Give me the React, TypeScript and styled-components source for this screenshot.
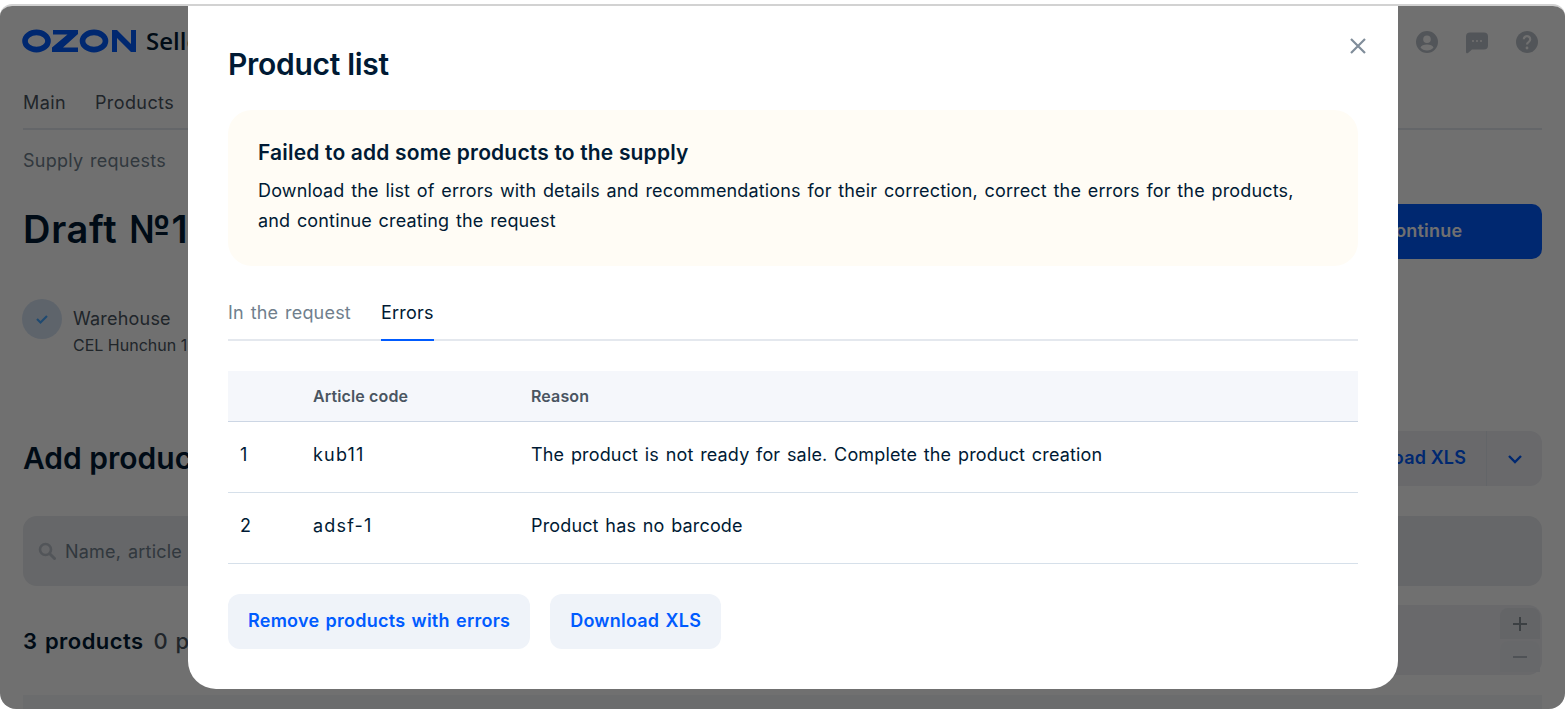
import styled, { createGlobalStyle } from "styled-components";

const GlobalStyle = createGlobalStyle`
  html, body {
    margin: 0;
    padding: 0;
    height: 100%;
    background: #fff;
    overflow: hidden;
    font-family: Inter, "Liberation Sans", sans-serif;
    letter-spacing: 0.15px;
    word-spacing: 1.5px;
    color: #001a34;
  }
`;

const Frame = styled.div`
  position: relative;
  height: 709px;
  padding-top: 4px;
  box-sizing: border-box;
`;

const Window = styled.div`
  position: relative;
  height: 705px;
  box-sizing: border-box;
  border-top: 2px solid #d2d2d2;
  border-radius: 12px 12px 16px 16px;
  overflow: hidden;
  background: #fff;
`;

const Page = styled.div`
  padding: 0 23px;
  display: flex;
  flex-direction: column;
`;

const Header = styled.div`
  height: 70px;
  display: flex;
  align-items: center;
  justify-content: space-between;
  padding-right: 3px;
  padding-bottom: 1px;
  box-sizing: border-box;
`;

const Brand = styled.div`
  display: flex;
  align-items: center;
  gap: 8px;
  margin-left: -1px;
`;

const SellerWord = styled.span`
  font-family: "Open Sans", sans-serif;
  font-size: 24px;
  font-weight: 600;
  letter-spacing: 0;
  color: #001a34;
`;

const HeaderIcons = styled.div`
  display: flex;
  gap: 26px;
  margin-top: 3px;
`;

const Nav = styled.nav`
  height: 54px;
  display: flex;
  gap: 29px;
  padding-top: 14px;
  box-sizing: border-box;
  border-bottom: 2px solid #e4e8ee;
  font-size: 18px;
  line-height: 26px;
  letter-spacing: 0.4px;
  color: #4a5561;
`;

const Crumb = styled.div`
  margin-top: 18px;
  font-size: 18px;
  line-height: 26px;
  letter-spacing: 0.25px;
  color: #707f8d;
`;

const TitleRow = styled.div`
  margin-top: 30px;
  display: flex;
  justify-content: space-between;
  align-items: center;
  height: 55px;
`;

const DraftTitle = styled.h1`
  margin: 0 0 6px;
  font-size: 38px;
  line-height: 50px;
  font-weight: 600;
  letter-spacing: 0.7px;
  color: #001a34;
`;

const ContinueButton = styled.button`
  width: 340px;
  height: 55px;
  border: 0;
  border-radius: 10px;
  background: #005bff;
  color: #fff;
  font: 600 18px Inter, sans-serif;
  letter-spacing: 0.2px;
  padding: 0 0 2px 100px;
`;

const Step = styled.div`
  margin-top: 40px;
  margin-left: -1px;
  display: flex;
  gap: 11px;
`;

const StepCircle = styled.div`
  width: 40px;
  height: 40px;
  border-radius: 50%;
  background: #d7e4f4;
  display: flex;
  align-items: center;
  justify-content: center;
`;

const StepText = styled.div`
  display: flex;
  flex-direction: column;
`;

const StepName = styled.span`
  font-size: 18px;
  line-height: 26px;
  margin-top: 7px;
  letter-spacing: 0.2px;
  color: #4a5561;
`;

const StepSub = styled.span`
  font-size: 16px;
  line-height: 26px;
  letter-spacing: 0;
  word-spacing: 0;
  color: #4a5561;
`;

const AddRow = styled.div`
  margin-top: 73px;
  height: 55px;
  display: flex;
  justify-content: space-between;
  align-items: center;
`;

const AddTitle = styled.h2`
  margin: 0 0 2px;
  font-size: 30px;
  font-weight: 600;
  letter-spacing: 0;
  word-spacing: 0;
  color: #001a34;
`;

const SplitButton = styled.div`
  height: 55px;
  width: 340px;
  display: flex;
  border-radius: 12px;
  background: #eef0f4;
  color: #005bff;
  font-size: 18px;
  font-weight: 600;
  word-spacing: 0;
`;

const SplitLabel = styled.div`
  flex: 1;
  display: flex;
  align-items: center;
  justify-content: flex-end;
  padding: 0 20px 2px 0;
  border-right: 1px solid #e2e6ec;
`;

const SplitArrow = styled.div`
  width: 55px;
  display: flex;
  align-items: center;
  justify-content: center;
`;

const SearchBox = styled.div`
  margin-top: 30px;
  height: 70px;
  border-radius: 14px;
  background: #e8eaee;
  display: flex;
  align-items: center;
  gap: 9px;
  padding-left: 15px;
  font-size: 18px;
  letter-spacing: 0.22px;
  color: #707f8d;
`;

const CountRow = styled.div`
  margin-top: 19px;
  height: 70px;
  display: flex;
  align-items: center;
  gap: 11px;
  padding-top: 2px;
  box-sizing: border-box;
`;

const CountStrong = styled.span`
  font-size: 22px;
  font-weight: 600;
  letter-spacing: 0.45px;
  color: #001a34;
`;

const CountMuted = styled.span`
  font-size: 22px;
  font-weight: 500;
  margin-left: -1px;
  color: #4a5561;
`;

const ZoomBox = styled.div`
  margin-left: auto;
  margin-top: -2px;
  width: 340px;
  height: 70px;
  border-radius: 14px;
  background: #eef0f4;
  display: flex;
  justify-content: flex-end;
  padding: 3px 2px;
  box-sizing: border-box;
`;

const ZoomColumn = styled.div`
  width: 40px;
  display: flex;
  flex-direction: column;
  gap: 2px;
`;

const ZoomKey = styled.div<{ $muted?: boolean }>`
  flex: 1;
  display: flex;
  align-items: center;
  justify-content: center;
  background: ${(p) => (p.$muted ? "#ebedf1" : "#e3e5ea")};
  border-radius: 8px 8px 0 0;
`;

const TableStub = styled.div`
  margin-top: 20px;
  height: 40px;
  background: #f4f5f7;
`;

const Overlay = styled.div`
  position: absolute;
  inset: 0;
  background: rgba(0, 0, 0, 0.56);
`;

const Modal = styled.div`
  position: absolute;
  top: 0;
  left: 188px;
  width: 1210px;
  height: 683px;
  box-sizing: border-box;
  padding: 0 40px;
  background: #fff;
  border-radius: 0 0 28px 28px;
  display: flex;
  flex-direction: column;
`;

const CloseButton = styled.button`
  position: absolute;
  top: 28px;
  right: 28px;
  width: 24px;
  height: 24px;
  padding: 0;
  border: 0;
  background: none;
  display: flex;
  align-items: center;
  justify-content: center;
`;

const ModalTitle = styled.h2`
  margin: 38px 0 0;
  font-size: 30px;
  line-height: 40px;
  font-weight: 600;
  letter-spacing: -0.3px;
  word-spacing: 0;
  color: #001a34;
`;

const Notice = styled.div`
  margin-top: 26px;
  height: 156px;
  box-sizing: border-box;
  padding: 28px 30px 0;
  border-radius: 24px;
  background: #fffcf5;
`;

const NoticeTitle = styled.div`
  font-size: 21px;
  line-height: 30px;
  font-weight: 600;
  letter-spacing: 0.17px;
  word-spacing: 0;
  color: #001a34;
`;

const NoticeText = styled.p`
  margin: 8px 0 0;
  font-size: 18px;
  line-height: 30px;
  color: #001a34;
`;

const Tabs = styled.div`
  margin-top: 29px;
  height: 44px;
  display: flex;
  gap: 30px;
  border-bottom: 2px solid #e4e8ee;
`;

const Tab = styled.div<{ $active?: boolean }>`
  height: 44px;
  box-sizing: content-box;
  font-size: 18px;
  line-height: 36px;
  letter-spacing: 0.2px;
  color: ${(p) => (p.$active ? "#001a34" : "#707f8d")};
  border-bottom: 2px solid ${(p) => (p.$active ? "#005bff" : "transparent")};
`;

const ErrorTable = styled.table`
  margin-top: 30px;
  width: 100%;
  border-collapse: collapse;
  table-layout: fixed;
`;

const HeadCell = styled.th`
  height: 50px;
  padding: 0 0 0 12px;
  box-sizing: border-box;
  background: #f5f7fb;
  border-bottom: 1px solid #ccd6e4;
  text-align: left;
  font-size: 16px;
  font-weight: 600;
  letter-spacing: 0.12px;
  word-spacing: 0;
  color: #4a5561;
`;

const Cell = styled.td`
  height: 71px;
  padding: 0 0 4px 12px;
  box-sizing: border-box;
  border-bottom: 1px solid #d6e0ea;
  font-size: 18px;
  color: #001a34;
`;

const CodeCell = styled(Cell)`
  letter-spacing: 1.2px;
`;

const Actions = styled.div`
  margin-top: 30px;
  display: flex;
  gap: 20px;
`;

const ActionButton = styled.button`
  height: 55px;
  padding: 0 20px 2px;
  border: 0;
  border-radius: 12px;
  background: #eff3f9;
  color: #005bff;
  font: 600 18px Inter, sans-serif;
  letter-spacing: 0.24px;
  word-spacing: 1.5px;
`;

const OzonLogo = () => (
  <svg width="116" height="24" viewBox="0 0 116 24" aria-label="OZON">
    <ellipse cx="14.5" cy="12" rx="11.5" ry="8.6" fill="none" stroke="#005bff" strokeWidth="5.6" />
    <polygon points="31,1 56,1 56,5 41,18.4 56,18.4 56,23 30,23 30,18.6 45.5,5.4 31,5.4" fill="#005bff" />
    <ellipse cx="72" cy="12" rx="11.5" ry="8.6" fill="none" stroke="#005bff" strokeWidth="5.6" />
    <polygon points="90,1 95,1 109,15 109,1 114,1 114,23 109,23 95,9 95,23 90,23" fill="#005bff" />
  </svg>
);

const UserIcon = () => (
  <svg width="24" height="24" viewBox="0 0 24 24">
    <path
      fill="#bcc2ca"
      fillRule="evenodd"
      d="M12 1a11 11 0 1 1 0 22 11 11 0 0 1 0-22Zm0 4.5a3.8 3.8 0 1 0 0 7.6 3.8 3.8 0 0 0 0-7.6ZM5.5 17.5c1.4 2 3.8 3 6.5 3s5.100-1 6.500-3c-.5-2-3.500-3-6.500-3s-6 1-6.500 3Z"
    />
  </svg>
);

const ChatIcon = () => (
  <svg width="24" height="24" viewBox="0 0 24 24">
    <path
      fill="#bcc2ca"
      fillRule="evenodd"
      d="M5 2.500h14a4 4 0 0 1 4 4v9a4 4 0 0 1-4 4H7l-4 3.500c-.8.5-2 .2-2-1V6.500a4 4 0 0 1 4-4Z"
    />
    <circle cx="8" cy="11" r="1" fill="#fff" />
    <circle cx="12" cy="11" r="1" fill="#fff" />
    <circle cx="16" cy="11" r="1" fill="#fff" />
  </svg>
);

const HelpIcon = () => (
  <svg width="24" height="24" viewBox="0 0 24 24">
    <circle cx="12" cy="12" r="11" fill="#bcc2ca" />
    <path d="M8.800 9.300a3.200 3.200 0 1 1 4.800 2.800c-1 .6-1.600 1.100-1.600 2.400" fill="none" stroke="#fff" strokeWidth="2.200" />
    <circle cx="12" cy="18" r="1.400" fill="#fff" />
  </svg>
);

const App = () => {
  return (
    <>
      <GlobalStyle />
      <Frame>
        <Window>
          <Page>
            <Header>
              <Brand>
                <OzonLogo />
                <SellerWord>Seller</SellerWord>
              </Brand>
              <HeaderIcons>
                <UserIcon />
                <ChatIcon />
                <HelpIcon />
              </HeaderIcons>
            </Header>
            <Nav>
              <span>Main</span>
              <span>Products</span>
            </Nav>
            <Crumb>Supply requests</Crumb>
            <TitleRow>
              <DraftTitle>Draft №1</DraftTitle>
              <ContinueButton>Continue</ContinueButton>
            </TitleRow>
            <Step>
              <StepCircle>
                <svg width="14" height="12" viewBox="0 0 14 12">
                  <path d="M2 6l3.500 3.500L12 3" fill="none" stroke="#48a8ff" strokeWidth="2.200" />
                </svg>
              </StepCircle>
              <StepText>
                <StepName>Warehouse</StepName>
                <StepSub>CEL Hunchun 1</StepSub>
              </StepText>
            </Step>
            <AddRow>
              <AddTitle>Add products</AddTitle>
              <SplitButton>
                <SplitLabel>Upload XLS</SplitLabel>
                <SplitArrow>
                  <svg width="16" height="10" viewBox="0 0 16 10">
                    <path d="M2 2l6 6 6-6" fill="none" stroke="#005bff" strokeWidth="2.400" />
                  </svg>
                </SplitArrow>
              </SplitButton>
            </AddRow>
            <SearchBox>
              <svg width="18" height="18" viewBox="0 0 18 18">
                <circle cx="7.500" cy="7.500" r="5.500" fill="none" stroke="#bcc2ca" strokeWidth="2.600" />
                <path d="M12 12l4.500 4.500" stroke="#bcc2ca" strokeWidth="3" strokeLinecap="round" />
              </svg>
              Name, article
            </SearchBox>
            <CountRow>
              <CountStrong>3 products</CountStrong>
              <CountMuted>0 pieces</CountMuted>
              <ZoomBox>
                <ZoomColumn>
                  <ZoomKey>
                    <svg width="16" height="16" viewBox="0 0 16 16">
                      <path d="M8 1v14M1 8h14" stroke="#8a929a" strokeWidth="2" />
                    </svg>
                  </ZoomKey>
                  <ZoomKey $muted>
                    <svg width="16" height="16" viewBox="0 0 16 16">
                      <path d="M1 8h14" stroke="#b5bcc4" strokeWidth="2" />
                    </svg>
                  </ZoomKey>
                </ZoomColumn>
              </ZoomBox>
            </CountRow>
            <TableStub />
          </Page>
          <Overlay />
          <Modal>
            <CloseButton aria-label="Close">
              <svg width="18" height="18" viewBox="0 0 18 18">
                <path d="M2 2l14 14M16 2L2 16" stroke="#808d9a" strokeWidth="2.200" />
              </svg>
            </CloseButton>
            <ModalTitle>Product list</ModalTitle>
            <Notice>
              <NoticeTitle>Failed to add some products to the supply</NoticeTitle>
              <NoticeText>
                Download the list of errors with details and recommendations for their correction, correct the errors for the products, and continue creating the request
              </NoticeText>
            </Notice>
            <Tabs>
              <Tab>In the request</Tab>
              <Tab $active>Errors</Tab>
            </Tabs>
            <ErrorTable>
              <colgroup>
                <col width="73" />
                <col width="218" />
                <col />
              </colgroup>
              <thead>
                <tr>
                  <HeadCell></HeadCell>
                  <HeadCell>Article code</HeadCell>
                  <HeadCell>Reason</HeadCell>
                </tr>
              </thead>
              <tbody>
                <tr>
                  <Cell>1</Cell>
                  <CodeCell>kub11</CodeCell>
                  <Cell>The product is not ready for sale. Complete the product creation</Cell>
                </tr>
                <tr>
                  <Cell>2</Cell>
                  <CodeCell>adsf-1</CodeCell>
                  <Cell>Product has no barcode</Cell>
                </tr>
              </tbody>
            </ErrorTable>
            <Actions>
              <ActionButton>Remove products with errors</ActionButton>
              <ActionButton>Download XLS</ActionButton>
            </Actions>
          </Modal>
        </Window>
      </Frame>
    </>
  );
};

export default App;
